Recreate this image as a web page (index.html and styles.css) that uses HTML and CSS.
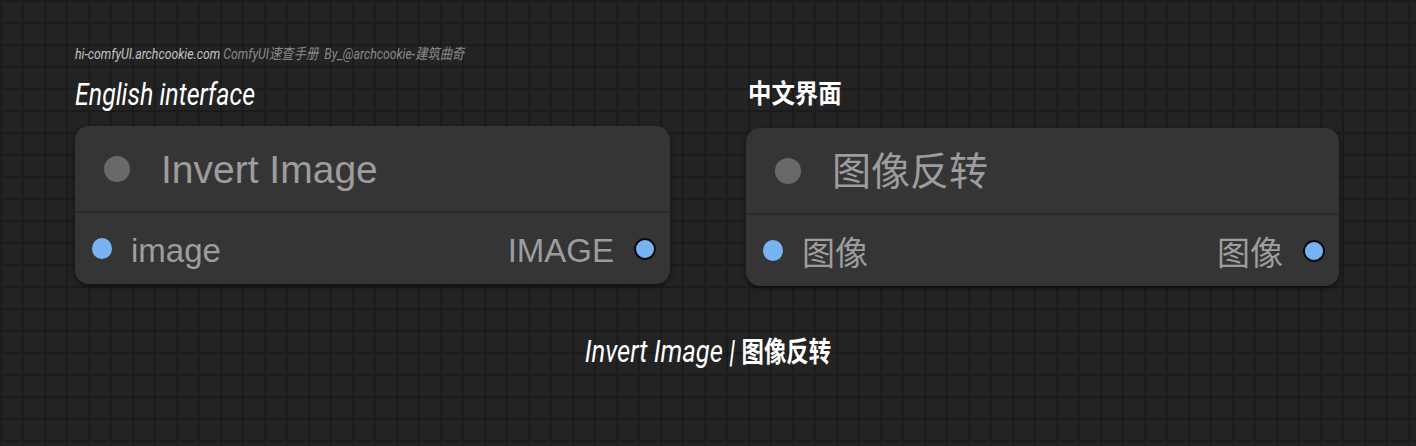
FILE: index.html
```html
<!DOCTYPE html>
<html lang="zh-CN">
<head>
    <meta charset="UTF-8">
    <title>Invert Image | 图像反转</title>
    <link rel="stylesheet" href="styles.css">
</head>
<body>

<div class="page">
    <!-- credit line -->
    <div class="credit">
        <span class="narrow"><span class="site">hi-comfyUI.archcookie.com</span> <span class="by">ComfyUI速查手册&nbsp; By_@archcookie-建筑曲奇</span></span>
    </div>

    <div class="columns">
        <!-- English node -->
        <div class="col">
            <div class="label"><span class="narrow">English interface</span></div>
            <div class="node">
                <div class="node-title">
                    <span class="dot-grey"></span>
                    <span class="title-text">Invert Image</span>
                </div>
                <div class="node-body">
                    <span class="slot-in"></span>
                    <span class="slot-name">image</span>
                    <span class="slot-out-name">IMAGE</span>
                    <span class="slot-out"></span>
                </div>
            </div>
        </div>

        <!-- Chinese node -->
        <div class="col col-zh">
            <div class="label label-zh"><span class="narrow">中文界面</span></div>
            <div class="node">
                <div class="node-title">
                    <span class="dot-grey"></span>
                    <span class="title-text">图像反转</span>
                </div>
                <div class="node-body">
                    <span class="slot-in"></span>
                    <span class="slot-name">图像</span>
                    <span class="slot-out-name">图像</span>
                    <span class="slot-out"></span>
                </div>
            </div>
        </div>
    </div>

    <div class="caption"><span class="narrow">Invert Image | <span class="zh">图像反转</span></span></div>
</div>

</body>
</html>
```

FILE: styles.css
```css
html, body {
    margin: 0;
    height: 100%;
}
body {
    background-color: #232323;
    background-image:
        linear-gradient(to right, #1b1b1b 2px, transparent 2px),
        linear-gradient(to bottom, #1b1b1b 2px, transparent 2px);
    background-size: 22px 22px;
    background-position: 0 0;
    font-family: "Liberation Sans", Arial, "Noto Sans CJK SC", sans-serif;
    overflow: hidden;
}
.page {
    padding: 45px 0 0 75px;
}
/* condensed look: no narrow font installed, so squeeze Roboto */
.narrow {
    display: inline-block;
    white-space: nowrap;
    transform: scaleX(0.78);
    transform-origin: left center;
}
.credit {
    font-family: Roboto, "Noto Sans CJK SC", sans-serif;
    font-style: italic;
    font-size: 15px;
    line-height: 18px;
    height: 18px;
}
.credit .narrow {
    transform: scaleX(0.82);
}
.credit .site {
    color: #c4c4c4;
}
.credit .by {
    color: #8a8a8a;
}
.columns {
    display: flex;
    gap: 76px;
    margin-top: 13px;
}
.col {
    width: 595px;
}
.col-zh {
    width: 593px;
}
.label {
    font-family: Roboto, "Noto Sans CJK SC", sans-serif;
    font-style: italic;
    font-size: 32px;
    line-height: 36px;
    height: 36px;
    color: #ffffff;
    margin-bottom: 14px;
}
.label-zh {
    font-family: "Noto Sans CJK SC", sans-serif;
    font-style: normal;
    font-weight: 700;
    font-size: 26px;
    line-height: 32px;
    height: 32px;
    padding: 0 0 0 2px;
    margin-bottom: 20px;
}
.label-zh .narrow {
    transform: scaleX(0.9);
}
.node {
    background: #353535;
    border-radius: 14px;
    box-shadow: 0 2px 5px rgba(0, 0, 0, 0.55);
    color: #9d9d9d;
}
.node-title {
    height: 85px;
    display: flex;
    align-items: center;
    padding-left: 29px;
    border-bottom: 2px solid #2a2a2a;
}
.dot-grey {
    width: 26px;
    height: 26px;
    border-radius: 50%;
    background: #696969;
    margin-right: 31px;
    flex: none;
}
.title-text {
    font-size: 39px;
    line-height: 44px;
    margin-top: 2px;
}
.col-zh .title-text {
    font-family: "Noto Sans CJK SC", sans-serif;
    font-size: 39px;
    line-height: 44px;
    margin-top: -5px;
}
.node-body {
    height: 71px;
    display: flex;
    align-items: center;
    padding: 0 14px 0 17px;
}
.slot-in {
    width: 20px;
    height: 21px;
    border-radius: 50%;
    background: #78b4f4;
    flex: none;
    margin-right: 19px;
}
.slot-name, .slot-out-name {
    font-size: 33px;
    line-height: 40px;
    margin-top: 4px;
}
.slot-out-name {
    margin-left: auto;
    margin-right: 20px;
}
.col-zh .slot-name, .col-zh .slot-out-name {
    font-family: "Noto Sans CJK SC", sans-serif;
    font-size: 33px;
    margin-top: 0;
}
.slot-out {
    width: 18px;
    height: 18px;
    border-radius: 50%;
    background: #78b4f4;
    border: 2px solid #0c0c0c;
    flex: none;
}
.caption {
    font-family: Roboto, "Noto Sans CJK SC", sans-serif;
    font-style: italic;
    font-size: 32px;
    line-height: 36px;
    color: #ffffff;
    text-align: center;
    margin: 47px 0 0 -75px;
}
.caption .narrow {
    transform: scaleX(0.8);
    transform-origin: center center;
}
.caption .zh {
    font-style: normal;
    font-weight: 700;
    font-size: 28px;
}
```
